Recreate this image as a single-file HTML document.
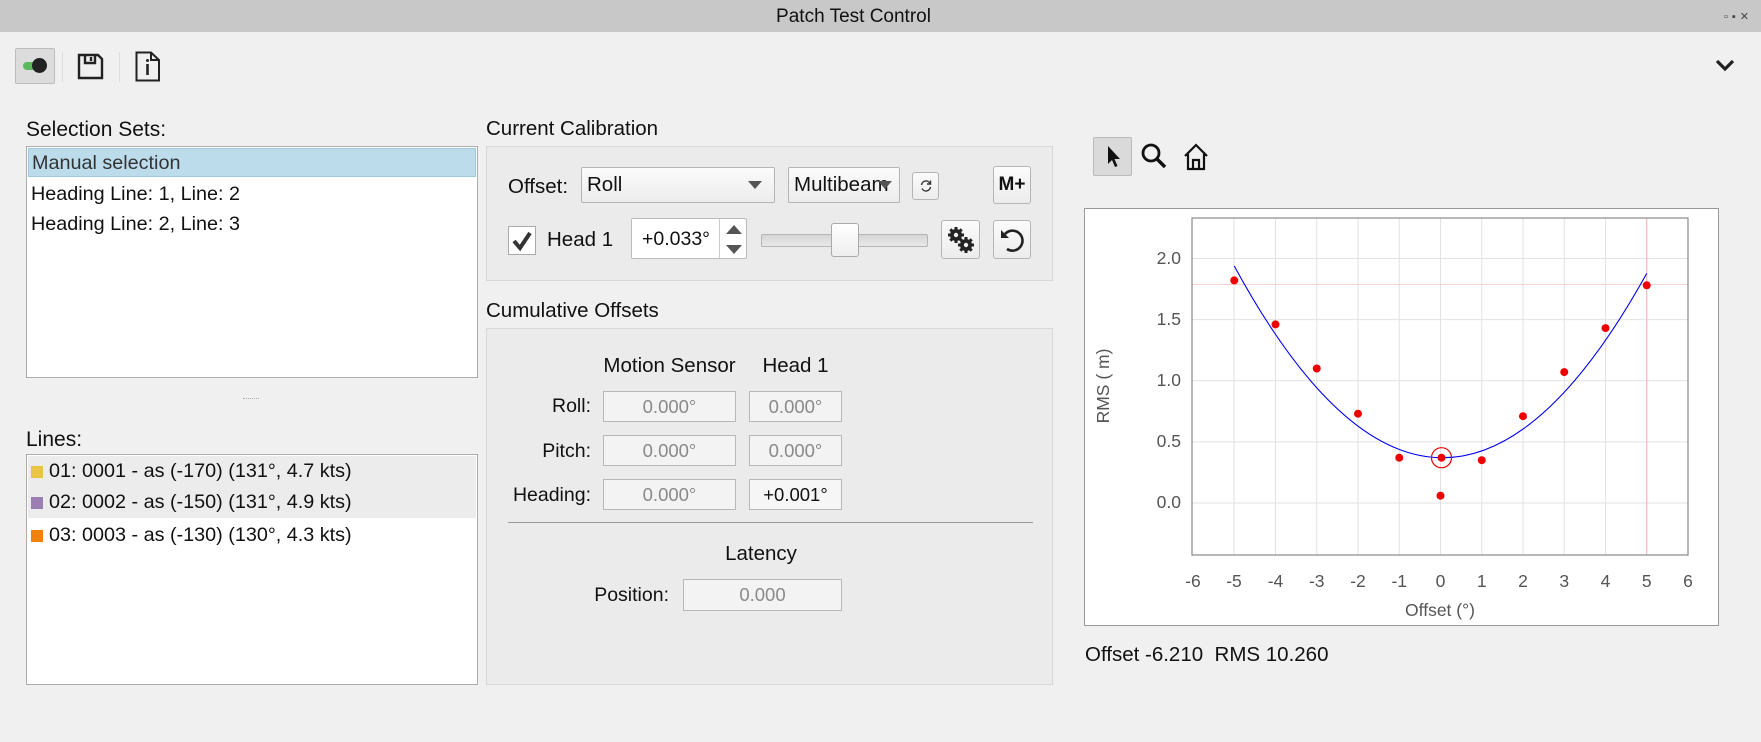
<!DOCTYPE html>
<html><head><meta charset="utf-8"><style>
*{box-sizing:border-box}
body{margin:0;width:1761px;height:742px;background:#f0f0f0;font-family:"Liberation Sans",sans-serif;font-size:19px;color:#111;position:relative;overflow:hidden}
.a{position:absolute}
.box{position:absolute;background:#fff;border:1px solid #adadad}
.grp{position:absolute;background:#ebebeb;border:1px solid #d8d8d8}
.btn{position:absolute;background:linear-gradient(#fbfbfb,#ececec);border:1px solid #b5b5b5;border-radius:3px;display:flex;align-items:center;justify-content:center}
.fld{position:absolute;border:1px solid #b8b8b8;background:#f3f3f3;color:#8a8a8a;display:flex;align-items:center;justify-content:center;font-size:18.5px}
.lbl{position:absolute;text-align:right;font-size:19.5px}
.row{position:absolute;left:1px;right:1px;height:31px;line-height:31px;padding-left:3px;font-size:19.8px;white-space:nowrap}
.sq{display:inline-block;width:12px;height:12px;margin-right:6px;vertical-align:-1px}
</style></head><body>
<div class="a" style="left:0;top:0;width:1761px;height:32px;background:#c8c8c8;text-align:center;line-height:34px;font-size:19px;padding-right:54px">Patch Test Control</div>
<div class="a" style="right:8px;top:10px;font-size:11px;color:#444;letter-spacing:4px">▫▪✕</div>

<div class="a" style="left:15px;top:48px;width:40px;height:36px;background:#dcdcdc;border:1px solid #bcbcbc;border-radius:2px"></div>
<div class="a" style="left:23px;top:62px;width:12px;height:8px;background:#5cb85c;border-radius:4px 0 0 4px"></div>
<div class="a" style="left:32px;top:58px;width:15px;height:15px;background:#222;border-radius:50%"></div>
<div class="a" style="left:62px;top:52px;width:1px;height:30px;background:#ddd"></div>
<svg class="a" style="left:77px;top:53px" width="27" height="27" viewBox="0 0 27 27"><path d="M2 2H21L25 6V25H2Z M8 2V10H18V2 M14 4V8" fill="none" stroke="#222" stroke-width="2.4"/></svg>
<div class="a" style="left:119px;top:52px;width:1px;height:30px;background:#ddd"></div>
<svg class="a" style="left:135px;top:51px" width="26" height="31" viewBox="0 0 26 31"><path d="M1.5 1.5H16L24 9V29.5H1.5Z M16 1.5V9H24" fill="none" stroke="#222" stroke-width="2"/><path d="M12.5 13V24" stroke="#222" stroke-width="2.6"/><circle cx="12.5" cy="9.5" r="1.5" fill="#222"/></svg>
<svg class="a" style="left:1714px;top:57px" width="22" height="16" viewBox="0 0 22 16"><path d="M3 4L11 12L19 4" fill="none" stroke="#222" stroke-width="3.2"/></svg>

<div class="a" style="left:26px;top:118px;font-size:21px">Selection Sets:</div>
<div class="box" style="left:26px;top:146px;width:452px;height:232px">
<div class="row" style="top:1px;height:29px;line-height:29px;background:#bcdcec;border:1px solid #9cc8e0;color:#333">Manual selection</div>
<div class="row" style="top:32px">Heading Line: 1, Line: 2</div>
<div class="row" style="top:62px">Heading Line: 2, Line: 3</div>
</div>
<div class="a" style="left:243px;top:398px;width:16px;border-top:1px dotted #aaa"></div>
<div class="a" style="left:26px;top:428px;font-size:21px">Lines:</div>
<div class="box" style="left:26px;top:454px;width:452px;height:231px">
<div class="row" style="top:1px;background:#ececec"><span class="sq" style="background:#e8c547"></span>01: 0001 - as (-170) (131°, 4.7 kts)</div>
<div class="row" style="top:32px;background:#ececec"><span class="sq" style="background:#9a7fb0"></span>02: 0002 - as (-150) (131°, 4.9 kts)</div>
<div class="row" style="top:65px"><span class="sq" style="background:#f0820f"></span>03: 0003 - as (-130) (130°, 4.3 kts)</div>
</div>

<div class="a" style="left:486px;top:117px;font-size:20.5px">Current Calibration</div>
<div class="grp" style="left:486px;top:146px;width:567px;height:135px"></div>
<div class="a" style="left:508px;top:175px;font-size:20.5px">Offset:</div>
<div class="btn" style="left:581px;top:167px;width:194px;height:36px;justify-content:flex-start;padding-left:5px;font-size:20.5px;border-radius:2px">Roll</div>
<div class="a" style="left:748px;top:181px;width:0;height:0;border-left:7px solid transparent;border-right:7px solid transparent;border-top:8px solid #555"></div>
<div class="btn" style="left:788px;top:167px;width:112px;height:36px;justify-content:flex-start;padding-left:5px;font-size:20.5px;border-radius:2px;overflow:hidden;white-space:nowrap">Multibeam</div>
<div class="a" style="left:878px;top:181px;width:0;height:0;border-left:7px solid transparent;border-right:7px solid transparent;border-top:8px solid #555"></div>
<div class="btn" style="left:912px;top:172px;width:27px;height:28px"><svg width="14" height="14" viewBox="0 0 14 14"><path d="M2.5 6A4.5 4.5 0 0 1 11 4.5M11.5 8A4.5 4.5 0 0 1 3 9.5" fill="none" stroke="#333" stroke-width="1.4"/><path d="M11.5 1.5V5H8" fill="none" stroke="#333" stroke-width="1.4"/></svg></div>
<div class="btn" style="left:993px;top:166px;width:38px;height:38px;font-weight:bold;font-size:19px">M+</div>
<div class="a" style="left:508px;top:226px;width:28px;height:29px;background:#fff;border:1px solid #aaa"></div>
<svg class="a" style="left:511px;top:230px" width="22" height="22" viewBox="0 0 22 22"><path d="M3 11L9 18L19 3" fill="none" stroke="#333" stroke-width="4"/></svg>
<div class="a" style="left:547px;top:228px;font-size:20.5px">Head 1</div>
<div class="a" style="left:631px;top:218px;width:116px;height:41px;background:#fff;border:1px solid #bbb;border-radius:2px"></div>
<div class="a" style="left:642px;top:228px;font-size:19.5px">+0.033°</div>
<div class="a" style="left:719px;top:219px;width:1px;height:39px;background:#ccc"></div>
<div class="a" style="left:726px;top:225px;border-left:8px solid transparent;border-right:8px solid transparent;border-bottom:9px solid #555"></div>
<div class="a" style="left:726px;top:245px;border-left:8px solid transparent;border-right:8px solid transparent;border-top:9px solid #555"></div>
<div class="a" style="left:761px;top:234px;width:167px;height:13px;background:linear-gradient(#d6d6d6,#e8e8e8);border:1px solid #b5b5b5;border-radius:2px"></div>
<div class="a" style="left:831px;top:223px;width:28px;height:34px;background:linear-gradient(#fff,#eee);border:1px solid #aaa;border-radius:3px"></div>
<div class="btn" style="left:941px;top:220px;width:39px;height:39px"><svg width="30" height="30" viewBox="0 0 30 30"><g fill="#222"><circle cx="10" cy="10" r="6"/><circle cx="20" cy="20" r="6"/></g><g stroke="#222" stroke-width="3"><path d="M10 2V18M2 10H18M4.3 4.3L15.7 15.7M15.7 4.3L4.3 15.7"/><path d="M20 12V28M12 20H28M14.3 14.3L25.7 25.7M25.7 14.3L14.3 25.7"/></g><circle cx="10" cy="10" r="2.2" fill="#eee"/><circle cx="20" cy="20" r="2.2" fill="#eee"/></svg></div>
<div class="btn" style="left:993px;top:220px;width:38px;height:39px"><svg width="28" height="28" viewBox="0 0 28 28"><path d="M7 8A10 10 0 1 1 9 23" fill="none" stroke="#222" stroke-width="2.6"/><path d="M3 4V12H11Z" fill="#222"/></svg></div>

<div class="a" style="left:486px;top:299px;font-size:20.5px">Cumulative Offsets</div>
<div class="grp" style="left:486px;top:328px;width:567px;height:357px"></div>
<div class="a" style="left:593px;top:354px;width:153px;text-align:center;font-size:20.5px">Motion Sensor</div>
<div class="a" style="left:749px;top:354px;width:93px;text-align:center;font-size:20.5px">Head 1</div>
<div class="lbl" style="left:480px;width:111px;top:395px">Roll:</div>
<div class="fld" style="left:603px;top:391px;width:133px;height:31px">0.000°</div>
<div class="fld" style="left:749px;top:391px;width:93px;height:31px">0.000°</div>
<div class="lbl" style="left:480px;width:111px;top:440px">Pitch:</div>
<div class="fld" style="left:603px;top:435px;width:133px;height:31px">0.000°</div>
<div class="fld" style="left:749px;top:435px;width:93px;height:31px">0.000°</div>
<div class="lbl" style="left:480px;width:111px;top:484px">Heading:</div>
<div class="fld" style="left:603px;top:479px;width:133px;height:31px">0.000°</div>
<div class="fld" style="left:749px;top:479px;width:93px;height:31px;color:#111;background:#f6f6f6">+0.001°</div>
<div class="a" style="left:508px;top:522px;width:525px;height:1px;background:#999"></div>
<div class="a" style="left:690px;top:542px;width:142px;text-align:center;font-size:20.5px">Latency</div>
<div class="lbl" style="left:550px;width:119px;top:584px">Position:</div>
<div class="fld" style="left:683px;top:579px;width:159px;height:32px">0.000</div>

<div class="a" style="left:1093px;top:137px;width:39px;height:39px;background:#dadada;border:1px solid #bbb;border-radius:2px"></div>
<svg class="a" style="left:1102px;top:143px" width="22" height="28" viewBox="0 0 22 28"><path d="M6 3V21L10 17L13 24L15.5 23L12.5 16H18Z" fill="#111"/></svg>
<svg class="a" style="left:1140px;top:142px" width="28" height="28" viewBox="0 0 28 28"><circle cx="11" cy="11" r="8" fill="none" stroke="#111" stroke-width="2.8"/><path d="M17 17L25 25" stroke="#111" stroke-width="3.4"/></svg>
<svg class="a" style="left:1182px;top:142px" width="28" height="30" viewBox="0 0 28 30"><path d="M3 14L14 3L25 14M6 12V27H22V12M11 27V18H17V27" fill="none" stroke="#111" stroke-width="2.2"/></svg>

<div class="box" style="left:1084px;top:208px;width:635px;height:418px;border-color:#999"></div>
<svg class="a" style="left:0;top:0" width="1761" height="742" font-family="Liberation Sans, sans-serif">
<g stroke="#e2e2e2" stroke-width="1">
<path d="M1234 218V555M1275.5 218V555M1316.75 218V555M1358 218V555M1399.25 218V555M1440.5 218V555M1481.75 218V555M1523 218V555M1564.25 218V555M1605.5 218V555"/>
<path d="M1192 258.5H1688M1192 319.6H1688M1192 380.7H1688M1192 441.9H1688M1192 503H1688"/>
</g>
<path d="M1192 284.5H1688" stroke="#f6d0d0" stroke-width="1"/>
<path d="M1646.75 218V555" stroke="#f0b0b0" stroke-width="1"/>
<rect x="1192" y="218" width="496" height="337" fill="none" stroke="#888" stroke-width="1.2"/>
<path d="M1234.25 266Q1440.5 645.7 1646.75 273.4" fill="none" stroke="#0000ee" stroke-width="1.1"/>
<g fill="#ee0000">
<circle cx="1234.25" cy="280.4" r="4"/><circle cx="1275.5" cy="324.4" r="4"/><circle cx="1316.75" cy="368.5" r="4"/><circle cx="1358" cy="413.7" r="4"/><circle cx="1399.25" cy="457.7" r="4"/><circle cx="1441.5" cy="457.7" r="4"/><circle cx="1440.5" cy="495.7" r="4"/><circle cx="1481.75" cy="460.2" r="4"/><circle cx="1523" cy="416.2" r="4"/><circle cx="1564.25" cy="372.1" r="4"/><circle cx="1605.5" cy="328.1" r="4"/><circle cx="1646.75" cy="285.3" r="4"/>
</g>
<circle cx="1441.5" cy="457.7" r="10" fill="none" stroke="#ee0000" stroke-width="1.2"/>
<g fill="#555" font-size="17.5" text-anchor="end">
<text x="1181" y="264">2.0</text><text x="1181" y="325">1.5</text><text x="1181" y="386">1.0</text><text x="1181" y="447">0.5</text><text x="1181" y="508">0.0</text>
</g>
<g fill="#555" font-size="17.5" text-anchor="middle">
<text x="1193" y="587">-6</text><text x="1234" y="587">-5</text><text x="1275.5" y="587">-4</text><text x="1316.75" y="587">-3</text><text x="1358" y="587">-2</text><text x="1399.25" y="587">-1</text><text x="1440.5" y="587">0</text><text x="1481.75" y="587">1</text><text x="1523" y="587">2</text><text x="1564.25" y="587">3</text><text x="1605.5" y="587">4</text><text x="1646.75" y="587">5</text><text x="1688" y="587">6</text>
<text x="1440" y="616">Offset (°)</text>
<text transform="translate(1109 386) rotate(-90)">RMS ( m)</text>
</g>
</svg>
<div class="a" style="left:1085px;top:643px;font-size:20.5px">Offset -6.210&nbsp; RMS 10.260</div>
</body></html>
